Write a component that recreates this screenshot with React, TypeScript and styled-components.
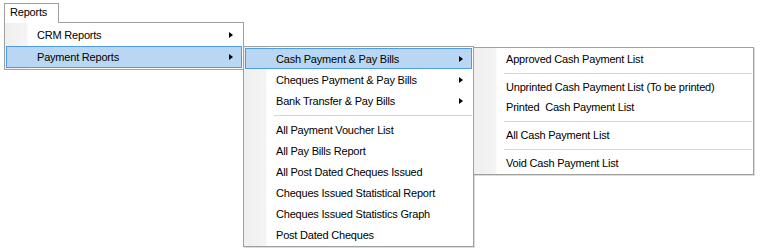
import React from "react";
import styled, { createGlobalStyle, css } from "styled-components";

const GlobalStyle = createGlobalStyle`
  html, body {
    margin: 0;
    padding: 0;
    background: #ffffff;
  }
  body {
    font-family: "Liberation Sans", Arial, sans-serif;
    font-size: 11px;
    color: #000000;
  }
`;

const Page = styled.div`
  position: relative;
  width: 768px;
  height: 249px;
  padding: 3px 0 0 4px;
  box-sizing: border-box;
  overflow: hidden;
`;

const MenuBar = styled.div`
  display: flex;
  position: relative;
  z-index: 5;
  margin-bottom: -1px;
`;

const Tab = styled.div`
  box-sizing: border-box;
  width: 55px;
  height: 20px;
  border: 1px solid #a0a0a0;
  border-bottom: none;
  background: #ffffff;
  padding: 2px 0 0 5px;
  letter-spacing: -0.2px;
`;

const Menu = styled.div<{ $width: number; $shadow?: boolean }>`
  box-sizing: border-box;
  width: ${(p) => p.$width}px;
  border: 1px solid #a0a0a0;
  padding: 1px;
  display: flex;
  flex-direction: column;
  background: linear-gradient(90deg, #efefef 0, #f4f4f4 22px, #ffffff 23px);
  ${(p) =>
    p.$shadow &&
    css`
      box-shadow: 1px 1px 0 rgba(0, 0, 0, 0.14);
    `}
`;

const SubMenu = styled(Menu)<{ $top: number }>`
  position: absolute;
  left: calc(100% + 2px);
  top: ${(p) => p.$top}px;
  z-index: 3;
`;

const Item = styled.div<{ $h: number; $active?: boolean }>`
  box-sizing: border-box;
  position: relative;
  height: ${(p) => p.$h}px;
  display: flex;
  align-items: center;
  padding-left: 30px;
  border: 1px solid transparent;
  white-space: nowrap;
  letter-spacing: -0.2px;
  ${(p) =>
    p.$active &&
    css`
      background: #b9d7f3;
      border-color: #4c9de6;
    `}
`;

const Label = styled.span`
  flex: 1;
`;

const Arrow = styled.span`
  width: 0;
  height: 0;
  border-left: 4px solid #000000;
  border-top: 3.5px solid transparent;
  border-bottom: 3.5px solid transparent;
  margin-right: 8px;
`;

const Separator = styled.div<{ $h: number }>`
  height: ${(p) => p.$h}px;
  display: flex;
  align-items: center;
  padding-left: 29px;

  &::after {
    content: "";
    flex: 1;
    height: 1px;
    background: #d6d6d6;
  }
`;

type Entry = string | null;

const cashItems: Entry[] = [
  "Approved Cash Payment List",
  null,
  "Unprinted Cash Payment List (To be printed)",
  "Printed  Cash Payment List",
  null,
  "All Cash Payment List",
  null,
  "Void Cash Payment List",
];

const paymentLists: string[] = [
  "All Payment Voucher List",
  "All Pay Bills Report",
  "All Post Dated Cheques Issued",
  "Cheques Issued Statistical Report",
  "Cheques Issued Statistics Graph",
  "Post Dated Cheques",
];

export default function App() {
  return (
    <>
      <GlobalStyle />
      <Page>
        <MenuBar>
          <Tab>Reports</Tab>
        </MenuBar>
        <Menu $width={240}>
          <Item $h={22}>
            <Label>CRM Reports</Label>
            <Arrow />
          </Item>
          <Item $h={22} $active>
            <Label>Payment Reports</Label>
            <Arrow />
            <SubMenu $width={231} $top={-1} $shadow>
              <Item $h={21} $active>
                <Label>Cash Payment &amp; Pay Bills</Label>
                <Arrow />
                <SubMenu $width={281} $top={-2} $shadow>
                  {cashItems.map((c, i) =>
                    c === null ? (
                      <Separator key={i} $h={8} />
                    ) : (
                      <Item key={i} $h={20}>
                        <Label style={{ whiteSpace: "pre" }}>{c}</Label>
                      </Item>
                    )
                  )}
                </SubMenu>
              </Item>
              <Item $h={21}>
                <Label>Cheques Payment &amp; Pay Bills</Label>
                <Arrow />
              </Item>
              <Item $h={21}>
                <Label>Bank Transfer &amp; Pay Bills</Label>
                <Arrow />
              </Item>
              <Separator $h={8} />
              {paymentLists.map((t) => (
                <Item key={t} $h={21}>
                  <Label>{t}</Label>
                </Item>
              ))}
            </SubMenu>
          </Item>
        </Menu>
      </Page>
    </>
  );
}
